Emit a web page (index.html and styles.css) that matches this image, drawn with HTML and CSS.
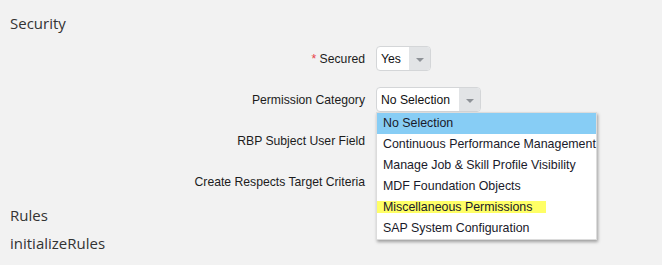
FILE: index.html
```html
<!DOCTYPE html>
<html>
<head>
<meta charset="utf-8">
<link rel="stylesheet" href="styles.css">
</head>
<body>
<div class="page">
  <h2 class="section-title">Security</h2>
  <div class="form">
    <label class="form-label"><span class="req">*</span> Secured</label>
    <div class="field">
      <div class="select select-short">
        <span class="select-value">Yes</span>
        <span class="select-arrow"><span class="tri"></span></span>
      </div>
    </div>
    <label class="form-label">Permission Category</label>
    <div class="field">
      <div class="select select-long">
        <span class="select-value">No Selection</span>
        <span class="select-arrow"><span class="tri"></span></span>
        <ul class="menu">
          <li class="menu-item selected">No Selection</li>
          <li class="menu-item">Continuous Performance Management</li>
          <li class="menu-item">Manage Job &amp; Skill Profile Visibility</li>
          <li class="menu-item">MDF Foundation Objects</li>
          <li class="menu-item"><span class="mark">Miscellaneous Permissions</span></li>
          <li class="menu-item">SAP System Configuration</li>
        </ul>
      </div>
    </div>
    <label class="form-label">RBP Subject User Field</label>
    <div class="field"></div>
    <label class="form-label">Create Respects Target Criteria</label>
    <div class="field"></div>
  </div>
  <h2 class="section-title section-rules">Rules</h2>
  <div class="section-title">initializeRules</div>
</div>
</body>
</html>
```
FILE: styles.css
```css
html, body {
  margin: 0;
  padding: 0;
  background: #f2f2f2;
}
.page {
  padding: 13px 10px 0 10px;
  font-family: "Open Sans", sans-serif;
  color: #333;
}
.section-title {
  margin: 0;
  font-size: 15px;
  font-weight: normal;
  line-height: 20px;
  color: #333;
}
.section-rules {
  margin-top: 7px;
  line-height: 28px;
}
.section-rules + .section-title {
  line-height: 28px;
}
.form {
  margin-top: 13px;
  display: grid;
  grid-template-columns: 355px auto;
  grid-auto-rows: 25px;
  column-gap: 11px;
  row-gap: 16px;
  font-family: "Liberation Sans", Arial, sans-serif;
  font-size: 12.2px;
  color: #1c1c1c;
}
.form-label {
  justify-self: end;
  align-self: center;
  white-space: nowrap;
}
.req {
  color: #e8424a;
}
.field {
  display: flex;
  align-items: stretch;
}
.select {
  position: relative;
  display: flex;
  align-items: stretch;
  box-sizing: border-box;
  height: 25px;
  border: 1px solid #d4d6d8;
  border-radius: 4px;
  background: #fff;
}
.select-short { width: 55px; }
.select-long { width: 105px; }
.select-value {
  flex: 1;
  display: flex;
  align-items: center;
  padding-left: 4px;
  color: #111;
  white-space: nowrap;
}
.select-arrow {
  width: 21px;
  display: flex;
  align-items: center;
  justify-content: center;
  background: #e2e4e6;
  border-radius: 0 3px 3px 0;
}
.tri {
  width: 0;
  height: 0;
  margin-top: 2px;
  border-left: 4px solid transparent;
  border-right: 4px solid transparent;
  border-top: 4px solid #8e9297;
}
.menu {
  position: absolute;
  top: 24px;
  left: -1px;
  width: 221px;
  box-sizing: border-box;
  margin: 0;
  padding: 0;
  list-style: none;
  background: #fff;
  border: 1px solid #dcdcdc;
  box-shadow: 1px 2px 3px rgba(0, 0, 0, 0.35);
  z-index: 2;
}
.menu-item {
  height: 21px;
  line-height: 21px;
  padding: 0 6px;
  font-size: 12.4px;
  color: #1a1a2a;
  white-space: nowrap;
}
.menu-item.selected {
  background: #87cdf5;
}
.mark {
  display: inline-block;
  margin-left: -6px;
  padding: 0 14px 0 6px;
  line-height: 12px;
  background: #ffff66;
}
```
